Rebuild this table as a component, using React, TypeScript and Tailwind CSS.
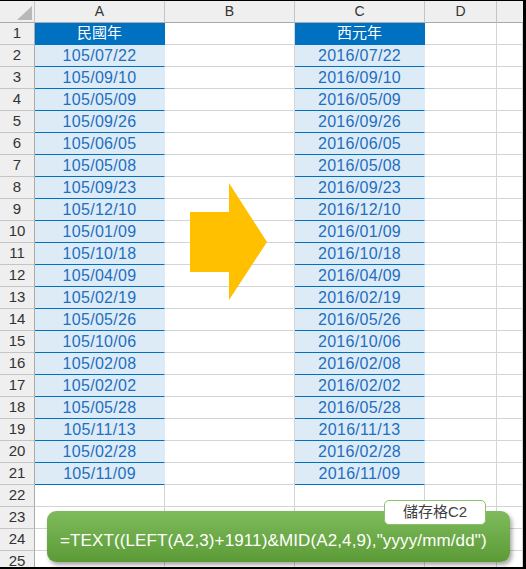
const rocDates = [
  '105/07/22', '105/09/10', '105/05/09', '105/09/26', '105/06/05',
  '105/05/08', '105/09/23', '105/12/10', '105/01/09', '105/10/18',
  '105/04/09', '105/02/19', '105/05/26', '105/10/06', '105/02/08',
  '105/02/02', '105/05/28', '105/11/13', '105/02/28', '105/11/09',
]

const toAD = (d: string) => `${parseInt(d.slice(0, 3)) + 1911}${d.slice(3)}`

const font = "font-['Liberation_Sans','Noto_Sans_CJK_TC',sans-serif]"

function HeaderCell({ children, last }: { children?: React.ReactNode; last?: boolean }) {
  return (
    <div
      className={`flex h-[22px] items-center justify-center border-b border-[#ababab] bg-[#efefef] text-[14px] text-[#333] ${
        last ? '' : 'border-r border-r-[#c4c4c4]'
      }`}
    >
      {children}
    </div>
  )
}

function RowHead({ n }: { n: number }) {
  return (
    <div className="flex h-[22px] items-center justify-center border-r border-b border-r-[#ababab] border-b-[#c4c4c4] bg-[#efefef] text-[15px] text-[#333]">
      {n}
    </div>
  )
}

function Cell() {
  return <div className="h-[22px] border-r border-b border-[#d4d4d4] bg-white" />
}

function TitleCell({ text }: { text: string }) {
  return (
    <div className="flex h-[22px] items-center justify-center border-r border-b border-[#0070c0] bg-[#0070c0] text-[15px] text-white">
      {text}
    </div>
  )
}

function DateCell({ text }: { text: string }) {
  return (
    <div className="flex h-[22px] items-center justify-center border-r border-b border-r-[#ddebf7] border-b-[#0070c0] bg-[#ddebf7] text-[16px] tracking-[0.3px] text-[#1e6fc0]">
      {text}
    </div>
  )
}

export default function App() {
  const rows = Array.from({ length: 25 }, (_, i) => i + 1)

  return (
    <div className={`relative h-[569px] w-[526px] overflow-hidden border-t border-r-[3px] border-b-2 border-black bg-white ${font}`}>
      <div className="grid grid-cols-[35px_130px_130px_130px_72px_1fr]">
        {/* 欄標題 */}
        <div className="relative h-[22px] border-r border-b border-r-[#c4c4c4] border-b-[#ababab] bg-[#efefef]">
          <svg className="absolute left-[17px] top-[5px]" width="15" height="14" viewBox="0 0 15 14">
            <polygon points="15,0 15,14 0,14" fill="#b8b8b8" />
          </svg>
        </div>
        <HeaderCell>A</HeaderCell>
        <HeaderCell>B</HeaderCell>
        <HeaderCell>C</HeaderCell>
        <HeaderCell>D</HeaderCell>
        <HeaderCell last />

        {rows.map((n) => {
          const date = n >= 2 && n <= 21 ? rocDates[n - 2] : null
          return (
            <div key={n} className="contents">
              <RowHead n={n} />
              {n === 1 ? <TitleCell text="民國年" /> : date ? <DateCell text={date} /> : <Cell />}
              <Cell />
              {n === 1 ? <TitleCell text="西元年" /> : date ? <DateCell text={toAD(date)} /> : <Cell />}
              <Cell />
              <Cell />
            </div>
          )
        })}
      </div>

      {/* 箭頭 */}
      <svg className="absolute left-[190px] top-[182px]" width="78" height="118" viewBox="0 0 78 118">
        <polygon points="0,29 39,29 39,0 77,59 39,117 39,89 0,89" fill="#ffc000" />
      </svg>

      {/* 公式說明 */}
      <div className="absolute left-[47px] top-[510px] flex h-[51px] w-[463px] items-center rounded-[9px] bg-gradient-to-b from-[#7fbb5c] to-[#5b9b36] pl-[13px] pt-[9px] text-[17px] tracking-[0.12px] text-white shadow-[2px_3px_4px_rgba(0,0,0,0.35)]">
        =TEXT((LEFT(A2,3)+1911)&amp;MID(A2,4,9),"yyyy/mm/dd")
      </div>
      <div className="absolute left-[384px] top-[499px] flex h-[25px] w-[102px] items-center justify-center rounded-[5px] border border-[#8cc06a] bg-white text-[15px] text-[#404040]">
        儲存格C2
      </div>
    </div>
  )
}
